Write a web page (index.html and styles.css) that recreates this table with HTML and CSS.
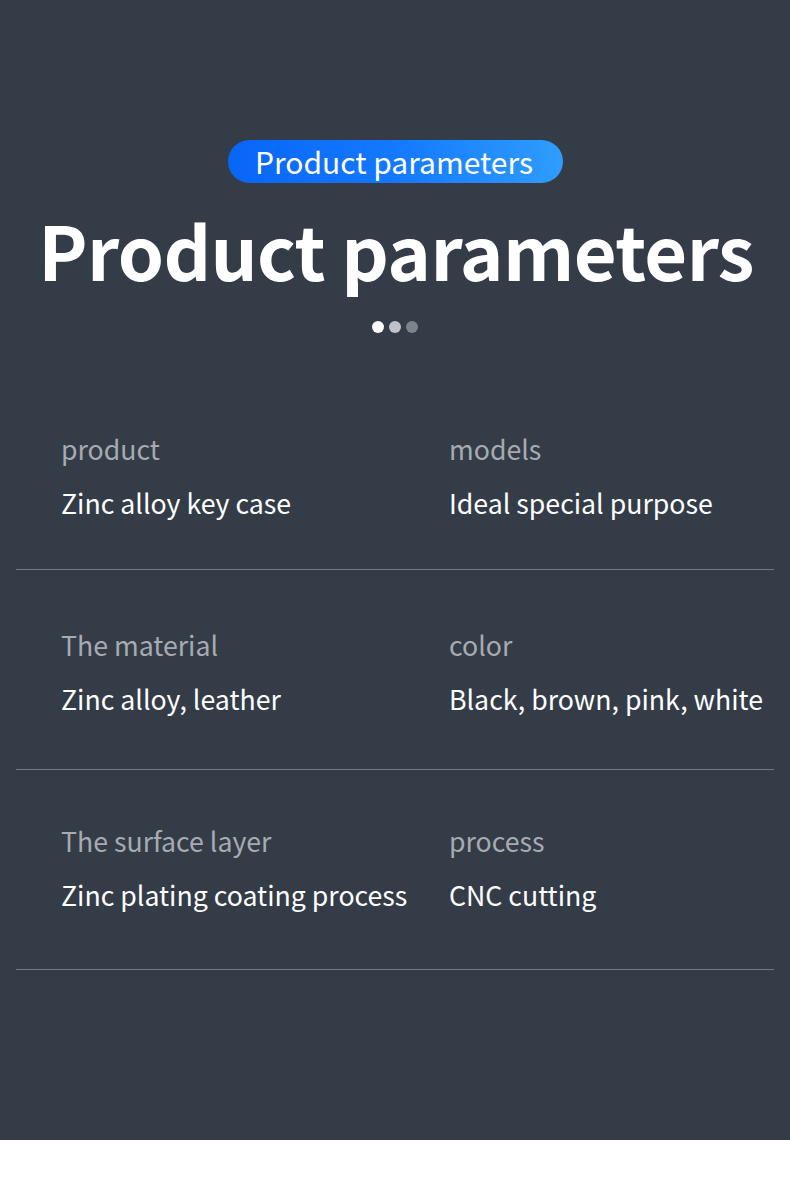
FILE: index.html
```html
<!DOCTYPE html>
<html lang="en">
<head>
<meta charset="utf-8">
<link rel="stylesheet" href="styles.css">
</head>
<body>
<main class="panel">
  <header class="head">
    <div class="pill">Product parameters</div>
    <h1 class="title">Product parameters</h1>
    <div class="dots"><span class="dot d1"></span><span class="dot d2"></span><span class="dot d3"></span></div>
  </header>
  <section class="table">
    <div class="row">
      <div class="cell"><div class="label">product</div><div class="value">Zinc alloy key case</div></div>
      <div class="cell"><div class="label">models</div><div class="value">Ideal special purpose</div></div>
    </div>
    <div class="row">
      <div class="cell"><div class="label">The material</div><div class="value">Zinc alloy, leather</div></div>
      <div class="cell"><div class="label">color</div><div class="value">Black, brown, pink, white</div></div>
    </div>
    <div class="row">
      <div class="cell"><div class="label">The surface layer</div><div class="value">Zinc plating coating process</div></div>
      <div class="cell"><div class="label">process</div><div class="value">CNC cutting</div></div>
    </div>
  </section>
</main>
</body>
</html>
```

FILE: styles.css
```css
* { box-sizing: border-box; margin: 0; padding: 0; }
html, body { background: #ffffff; }
body {
  width: 790px;
  font-family: "Noto Sans CJK SC", "Source Sans Pro", "Noto Sans", sans-serif;
}
.panel {
  background: #343c47;
  height: 1140px;
  padding-top: 140px;
}
.head {
  display: flex;
  flex-direction: column;
  align-items: center;
}
.pill {
  height: 43px;
  padding: 0 30px 0 27px;
  border-radius: 22px;
  background: linear-gradient(90deg, #0866f7 0%, #1479ff 50%, #2f9dfc 100%);
  color: #ffffff;
  font-size: 30px;
  line-height: 43px;
  margin-left: 1px;
}
.title {
  margin-top: 21px;
  color: #ffffff;
  font-size: 74px;
  font-weight: 700;
  line-height: 90px;
  letter-spacing: -0.6px;
  margin-left: 2px;
}
.dots {
  display: flex;
  gap: 5px;
  margin-top: 27px;
}
.dot { width: 12px; height: 12px; border-radius: 50%; }
.d1 { background: #ffffff; }
.d2 { background: #bfc3c9; }
.d3 { background: #7d838b; }
.table {
  margin: 0 16px;
  padding-top: 43px;
}
.row {
  display: grid;
  grid-template-columns: 388px 1fr;
  border-bottom: 1px solid #72777f;
  height: 200px;
  padding: 59px 0 0 45px;
}
.row:first-child { height: 194px; padding-top: 57px; }
.row:nth-child(3) { padding-top: 55px; }
.label {
  color: #a7abb1;
  font-size: 26.7px;
  line-height: 32px;
}
.value {
  margin-top: 22px;
  color: #ffffff;
  font-size: 26.7px;
  line-height: 32px;
}
```
